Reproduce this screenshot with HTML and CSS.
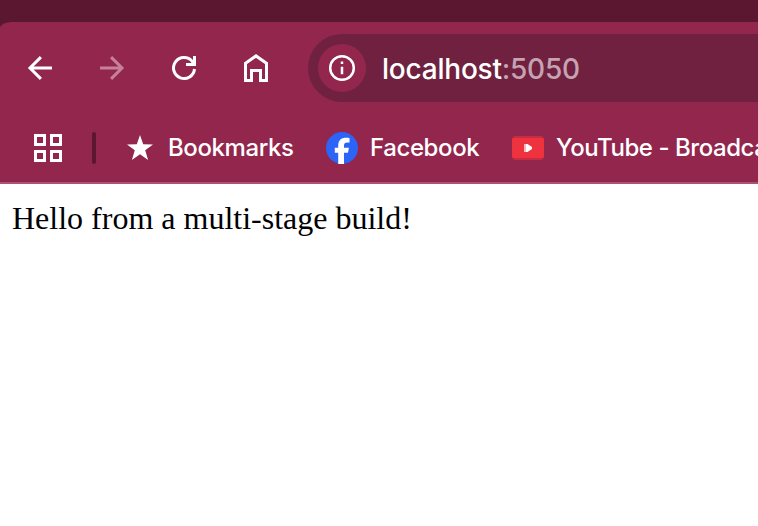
FILE: index.html
```html
<!DOCTYPE html>
<html lang="en">
<head>
<meta charset="utf-8">
<title>localhost:5050</title>
<link rel="stylesheet" href="styles.css">
</head>
<body>
<header class="browser">
  <div class="chrome">
    <nav class="toolbar">
      <svg class="nav-icon" viewBox="0 0 36 36"><path d="M30 18H8M18.9 7.1L8 18l10.9 10.9"/></svg>
      <svg class="nav-icon disabled" viewBox="0 0 36 36"><path d="M6 18h22M17.1 7.1L28 18 17.1 28.9"/></svg>
      <svg class="nav-icon" viewBox="0 0 36 36"><path d="M28.5 19A10.5 10.5 0 1 1 26.2 11.4L28 14M28.5 6v8.5H20"/></svg>
      <svg class="nav-icon" viewBox="0 0 36 36"><path d="M7.5 30.5v-17.2L18 5.9l10.5 7.4v17.2h-6v-10h-9v10z"/></svg>
      <div class="address">
        <span class="info"><svg viewBox="0 0 28 28"><circle cx="14" cy="14" r="11.8"/><path d="M14 12.7v7.6M14 7.6v2.5"/></svg></span>
        <span class="url">localhost<span class="port">:5050</span></span>
      </div>
    </nav>
    <nav class="bookmarks">
      <svg class="apps" viewBox="0 0 28 28"><path d="M1.5 1.5h9v9h-9zM17.5 1.5h9v9h-9zM1.5 17.5h9v9h-9zM17.5 17.5h9v9h-9z"/></svg>
      <span class="divider"></span>
      <span class="bookmark folder">
        <svg class="star" viewBox="0 0 26 26"><path d="M13 0l3.2 9.2 9.8.2-7.8 5.9 2.9 9.7-8.1-5.7L4.9 25l2.9-9.7L0 9.4l9.8-.2z"/></svg>
        <span class="label">Bookmarks</span>
      </span>
      <span class="bookmark facebook">
        <svg class="favicon" viewBox="0 0 32 32"><circle cx="16" cy="16" r="16" fill="#2b64f6"/><path fill="#fff" d="M12.2 32V20.7H8.8v-4.9h3.4v-1.9c0-5.6 2.6-8.2 8.1-8.2 1.1 0 2.5.2 3.2.4v4.5h-2.1c-2.5 0-3.4.9-3.4 3.4v1.8h4.9l-.9 4.9h-4V32z"/></svg>
        <span class="label">Facebook</span>
      </span>
      <span class="bookmark youtube">
        <svg class="favicon" viewBox="0 0 32 32"><rect y="4" width="32" height="24" rx="4" fill="#c92c42"/><rect y="6" width="32" height="20" rx="2" fill="#ee333e"/><path fill="#ffb5b9" d="M12 12h2v8h-2z"/><path fill="#fff" d="M14 12h1.5l4.5 3v2l-4.500 3H14z"/></svg>
        <span class="label">YouTube - Broadca</span>
      </span>
    </nav>
  </div>
</header>
<main class="page">Hello from a multi-stage build!</main>
</body>
</html>
```
FILE: styles.css
```css
* { box-sizing: border-box; }
body { margin: 0; background: #fff; overflow: hidden; }
svg { display: block; flex: none; }
.browser { padding-top: 22px; background: #5b1730; }
.chrome {
  height: 162px;
  background: #93264d;
  border-bottom: 2px solid #ab5275;
  border-top-left-radius: 12px 6px;
  font-family: Inter, sans-serif;
  font-feature-settings: "calt" 0;
  color: #fff;
  overflow: hidden;
}
.toolbar {
  display: flex;
  align-items: center;
  gap: 36px;
  height: 92px;
  padding-left: 22px;
}
.nav-icon { width: 36px; height: 36px; fill: none; stroke: #fff; stroke-width: 3; }
.disabled { stroke: #c58199; }
.address {
  flex: 1;
  display: flex;
  align-items: center;
  gap: 16px;
  height: 68px;
  margin-left: -2px;
  padding-left: 10px;
  border-radius: 34px 0 0 34px;
  background: #702140;
}
.info {
  display: grid;
  place-items: center;
  width: 48px;
  height: 48px;
  border-radius: 50%;
  background: #93264d;
}
.info svg { width: 28px; height: 28px; fill: none; stroke: #fff; stroke-width: 2.5; }
.url { padding-top: 1px; font-size: 28px; line-height: 34px; font-weight: 450; letter-spacing: -0.22px; }
.port { color: #c5a3b1; }
.bookmarks {
  display: flex;
  align-items: center;
  height: 68px;
  padding-left: 34px;
}
.apps { width: 28px; height: 28px; fill: none; stroke: #fff; stroke-width: 3; }
.divider { width: 4px; height: 32px; margin: 0 31px 0 30px; border-radius: 2px; background: #5b1730; flex: none; }
.bookmark { display: flex; align-items: center; flex: none; gap: 12px; white-space: nowrap; }
.folder { width: 199px; gap: 15px; }
.facebook { width: 186px; }
.star { width: 26px; height: 26px; fill: #fff; }
.favicon { width: 32px; height: 32px; }
.label { font-size: 24px; line-height: 30px; font-weight: 450; letter-spacing: -0.4px; }
.youtube .label { letter-spacing: -0.45px; }
.page { padding: 16px 12px; font: 32px/37px "Liberation Serif", serif; color: #000; }
```
